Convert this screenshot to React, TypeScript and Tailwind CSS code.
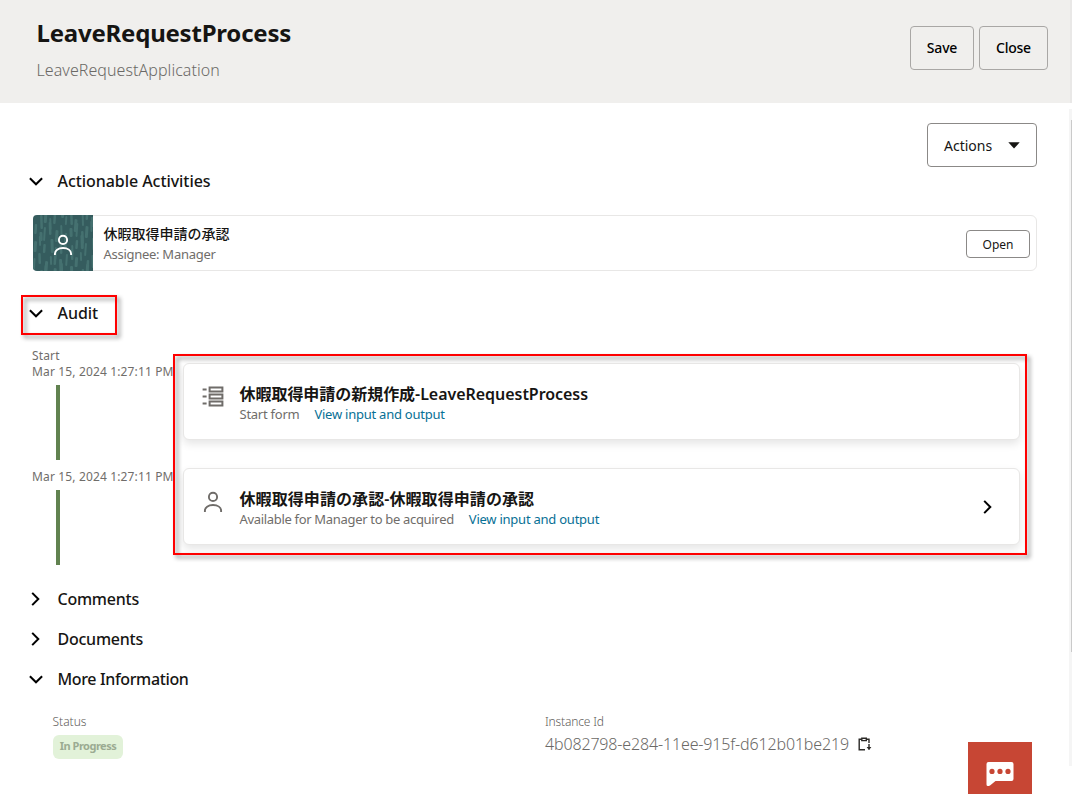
import React from "react";

function ChevronDown() {
  return (
    <svg width="14" height="9" viewBox="0 0 14 9" fill="none" stroke="#000" strokeWidth="2">
      <path d="M0.9 1.2 7 7.3 13.1 1.2" />
    </svg>
  );
}

function ChevronRight() {
  return (
    <svg width="9" height="14" viewBox="0 0 9 14" fill="none" stroke="#000" strokeWidth="2">
      <path d="M1.2 0.9 7.3 7 1.2 13.1" />
    </svg>
  );
}

function PersonIcon({ color }: { color: string }) {
  return (
    <svg width="20" height="22" viewBox="0 0 20 22" fill="none" stroke={color} strokeWidth="1.9">
      <circle cx="10" cy="5.9" r="4.1" />
      <path d="M1.9 21v-1.2c0-3.3 3.2-5.8 8.1-5.8s8.1 2.5 8.1 5.8V21" />
    </svg>
  );
}

function FormIcon() {
  return (
    <svg width="22" height="21" viewBox="0 0 22 21" fill="none" stroke="#6f6c69" strokeWidth="2">
      <path d="M0.6 3.5H4.6M0.6 10.5H4.6M0.6 17.5H4.6" />
      <path d="M7.6 1.5H20.4V5.5H7.6ZM7.6 8.5H20.4V12.5H7.6ZM7.6 15.5H20.4V19.5H7.6Z" />
    </svg>
  );
}

function CopyIcon() {
  return (
    <svg width="14" height="14" viewBox="0 0 14 14" fill="none" stroke="#2b2926" strokeWidth="1.4">
      <path d="M7 12.7H1.2V2.2H3.6M8.4 2.2H11V6" />
      <path d="M3.8 1.2H8.3V3.6H3.8Z" />
      <path d="M11 7V12.4" />
      <path d="M8.6 10H13.4L11 12.9Z" fill="#2b2926" stroke="none" />
    </svg>
  );
}

const strokes = Array.from({ length: 60 }, (_, i) => {
  const col = i % 12;
  const row = Math.floor(i / 12);
  return {
    x: col * 5.2 + ((row * 7 + col * 3) % 4) * 0.6,
    y: row * 14 - 8 + ((col * 8 + row * 3) % 13),
    h: 9 + ((col * 5 + row * 7) % 6),
    w: 2 + ((col + row) % 3) * 0.5,
  };
});

function Thumb() {
  return (
    <div className="relative flex h-14 w-[60px] shrink-0 items-center justify-center overflow-hidden rounded-l bg-[#355c5e]">
      <svg className="absolute inset-0" width="60" height="56" viewBox="0 0 60 56">
        {strokes.map((s, i) => (
          <rect
            key={i}
            x={s.x}
            y={s.y}
            width={s.w}
            height={s.h}
            rx="1.1"
            fill="#457170"
            transform={`rotate(${i % 2 ? -2 : 4} ${s.x} ${s.y})`}
          />
        ))}
      </svg>
      <div className="relative mt-[3px]">
        <PersonIcon color="#fff" />
      </div>
    </div>
  );
}

function Heading({ open, className, label, spacing }: { open: boolean; className: string; label: string; spacing: string }) {
  return (
    <div className={`flex h-6 items-center pl-[28.5px] ${className}`}>
      <span className="flex w-[29px] items-center">
        {open ? <ChevronDown /> : <span className="ml-[2px]"><ChevronRight /></span>}
      </span>
      <h2 className={`whitespace-nowrap text-[16px] leading-6 font-medium text-[#161513] ${spacing}`}>{label}</h2>
    </div>
  );
}

function AuditCard({ icon, title, titleSpacing, status, statusSpacing, arrow }: { icon: React.ReactNode; title: string; titleSpacing: string; status: string; statusSpacing: string; arrow?: boolean }) {
  return (
    <div className="flex h-[77px] w-[837px] rounded-md border border-[#e8e7e6] bg-white shadow-[0_4px_8px_rgba(0,0,0,0.1)]">
      <div className="flex w-[55.5px] shrink-0 justify-center pt-[22px] pl-[2px]">{icon}</div>
      <div className="flex-1 pt-5 whitespace-nowrap">
        <div className={`text-[16px] leading-5 font-semibold text-[#161513] ${titleSpacing}`}>{title}</div>
        <div className="flex gap-[15px] text-[13px] leading-5">
          <span className={`text-[#706d6a] ${statusSpacing}`}>{status}</span>
          <a className="tracking-[-0.24px] text-[#077095]">View input and output</a>
        </div>
      </div>
      {arrow && (
        <div className="flex items-center pt-px pr-[27px]">
          <ChevronRight />
        </div>
      )}
    </div>
  );
}

const highlight = "pointer-events-none absolute border-2 border-[#fe0000] [filter:drop-shadow(3px_3px_2px_rgba(0,0,0,0.45))]";

export default function App() {
  return (
    <div className="relative h-[794px] w-[1072px] overflow-hidden bg-white font-['Noto_Sans','Noto_Sans_CJK_JP',sans-serif] text-[#161513]">
      <header className="flex h-[103px] justify-between bg-[#f0efed] pr-6 pl-[36.5px]">
        <div className="pt-[21px] whitespace-nowrap">
          <h1 className="text-[24px] leading-6 font-bold tracking-[-0.22px]">LeaveRequestProcess</h1>
          <p className="mt-[15px] text-[16px] leading-5 font-light tracking-[0.06px] text-[#6b6966]">LeaveRequestApplication</p>
        </div>
        <div className="flex gap-[5px] pt-[26px] text-[14px] font-medium text-black">
          <button className="h-11 w-16 rounded-[4px] border border-[#a9a7a5] pb-0.5 tracking-[-0.15px]">Save</button>
          <button className="h-11 w-[69px] rounded-[4px] border border-[#a9a7a5] pb-0.5 tracking-[-0.25px]">Close</button>
        </div>
      </header>

      <main className="pt-5">
        <div className="flex justify-end pr-[35px]">
          <button className="flex h-11 w-[110px] items-center rounded-[4px] border border-[#8b8987] pl-4 text-[14px]">
            Actions
            <svg className="ml-4" width="12" height="7" viewBox="0 0 12 7">
              <path d="M0.3 0.3H11.7L6 6.6Z" fill="#161513" />
            </svg>
          </button>
        </div>

        <Heading open className="mt-0.5" label="Actionable Activities" spacing="tracking-[-0.06px]" />

        <div className="mt-[22px] ml-[33px] flex h-14 w-[1004px] rounded-md border border-[#e8e7e6]">
          <div className="-mt-px -ml-px">
            <Thumb />
          </div>
          <div className="flex-1 pt-2 pl-[10.5px] whitespace-nowrap">
            <div className="text-[14px] leading-5 font-medium">休暇取得申請の承認</div>
            <div className="text-[13px] leading-5 tracking-[-0.28px] text-[#706d6a]">Assignee: Manager</div>
          </div>
          <div className="flex items-center pt-0.5 pr-1.5">
            <button className="h-7 w-16 rounded-[4px] border border-[#8b8987] pt-px text-[12px]">Open</button>
          </div>
        </div>

        <Heading open className="mt-[30px]" label="Audit" spacing="tracking-[-0.05px]" />

        <div className="mt-[23px] flex pl-8">
          <div className="w-[151px] text-[12px] leading-4 tracking-[0.14px] whitespace-nowrap text-[#706d6a]">
            <div>Start</div>
            <div>Mar 15, 2024 1:27:11 PM</div>
            <div className="mt-[5px] ml-6 h-[75px] w-1 bg-[#618250]" />
            <div className="mt-[9px]">Mar 15, 2024 1:27:11 PM</div>
            <div className="mt-[5px] ml-6 h-[75px] w-1 bg-[#618250]" />
          </div>
          <div className="flex flex-col gap-7 pt-[15px]">
            <AuditCard icon={<FormIcon />} title="休暇取得申請の新規作成-LeaveRequestProcess" titleSpacing="tracking-[-0.04px]" status="Start form" statusSpacing="tracking-[-0.25px]" />
            <AuditCard arrow icon={<PersonIcon color="#6f6c69" />} title="休暇取得申請の承認-休暇取得申請の承認" titleSpacing="tracking-[0.08px]" status="Available for Manager to be acquired" statusSpacing="tracking-[-0.32px]" />
          </div>
        </div>

        <Heading open={false} className="mt-[22px]" label="Comments" spacing="tracking-[-0.24px]" />
        <Heading open={false} className="mt-4" label="Documents" spacing="tracking-[-0.24px]" />
        <Heading open className="mt-4" label="More Information" spacing="tracking-[-0.36px]" />

        <div className="mt-[23px] flex pl-[53px] whitespace-nowrap">
          <div className="w-[492px]">
            <div className="-ml-[0.5px] text-[12px] leading-4 font-light text-[#5f5d5a]">Status</div>
            <div className="mt-[5px] h-6 w-[70px] rounded-md bg-[#e2f2d9] text-center text-[11px] leading-[22px] font-bold tracking-[-0.5px] text-[#9bab92]">
              In Progress
            </div>
          </div>
          <div>
            <div className="text-[12px] leading-4 font-light tracking-[-0.15px] text-[#5f5d5a]">Instance Id</div>
            <div className="mt-0.5 flex items-center">
              <span className="text-[16px] leading-6 font-light tracking-[-0.15px] text-[#6b6966]">4b082798-e284-11ee-915f-d612b01be219</span>
              <span className="ml-[9px]">
                <CopyIcon />
              </span>
            </div>
          </div>
        </div>
      </main>

      <div className={`${highlight} top-[295px] left-[21px] h-10 w-24`} />
      <div className={`${highlight} top-[354px] left-[173px] h-[201px] w-[854px]`} />

      <div className="absolute top-0 right-0 h-[103px] w-0.5 bg-[#e9e8e7]" />
      <div className="absolute top-[109px] right-0 h-[657px] w-[3px] bg-[#f5f5f5]">
        <div className="mt-[11px] ml-auto h-[532px] w-px bg-[#cacaca]" />
      </div>

      <div className="absolute top-[742px] left-[968px] flex h-[52px] w-16 justify-center bg-[#c74634] pt-5">
        <svg width="28" height="25" viewBox="0 0 28 25">
          <path d="M2.5 0H25.5Q27.5 0 27.5 2V17Q27.5 19 25.5 19H9.5L4 23.6Q0.5 25 0.5 22.5V2Q0.5 0 2.5 0Z" fill="#fff" />
          <g fill="#c74634">
            <circle cx="6" cy="9.4" r="2.6" />
            <circle cx="14" cy="9.4" r="2.6" />
            <circle cx="22" cy="9.4" r="2.6" />
          </g>
        </svg>
      </div>
    </div>
  );
}
